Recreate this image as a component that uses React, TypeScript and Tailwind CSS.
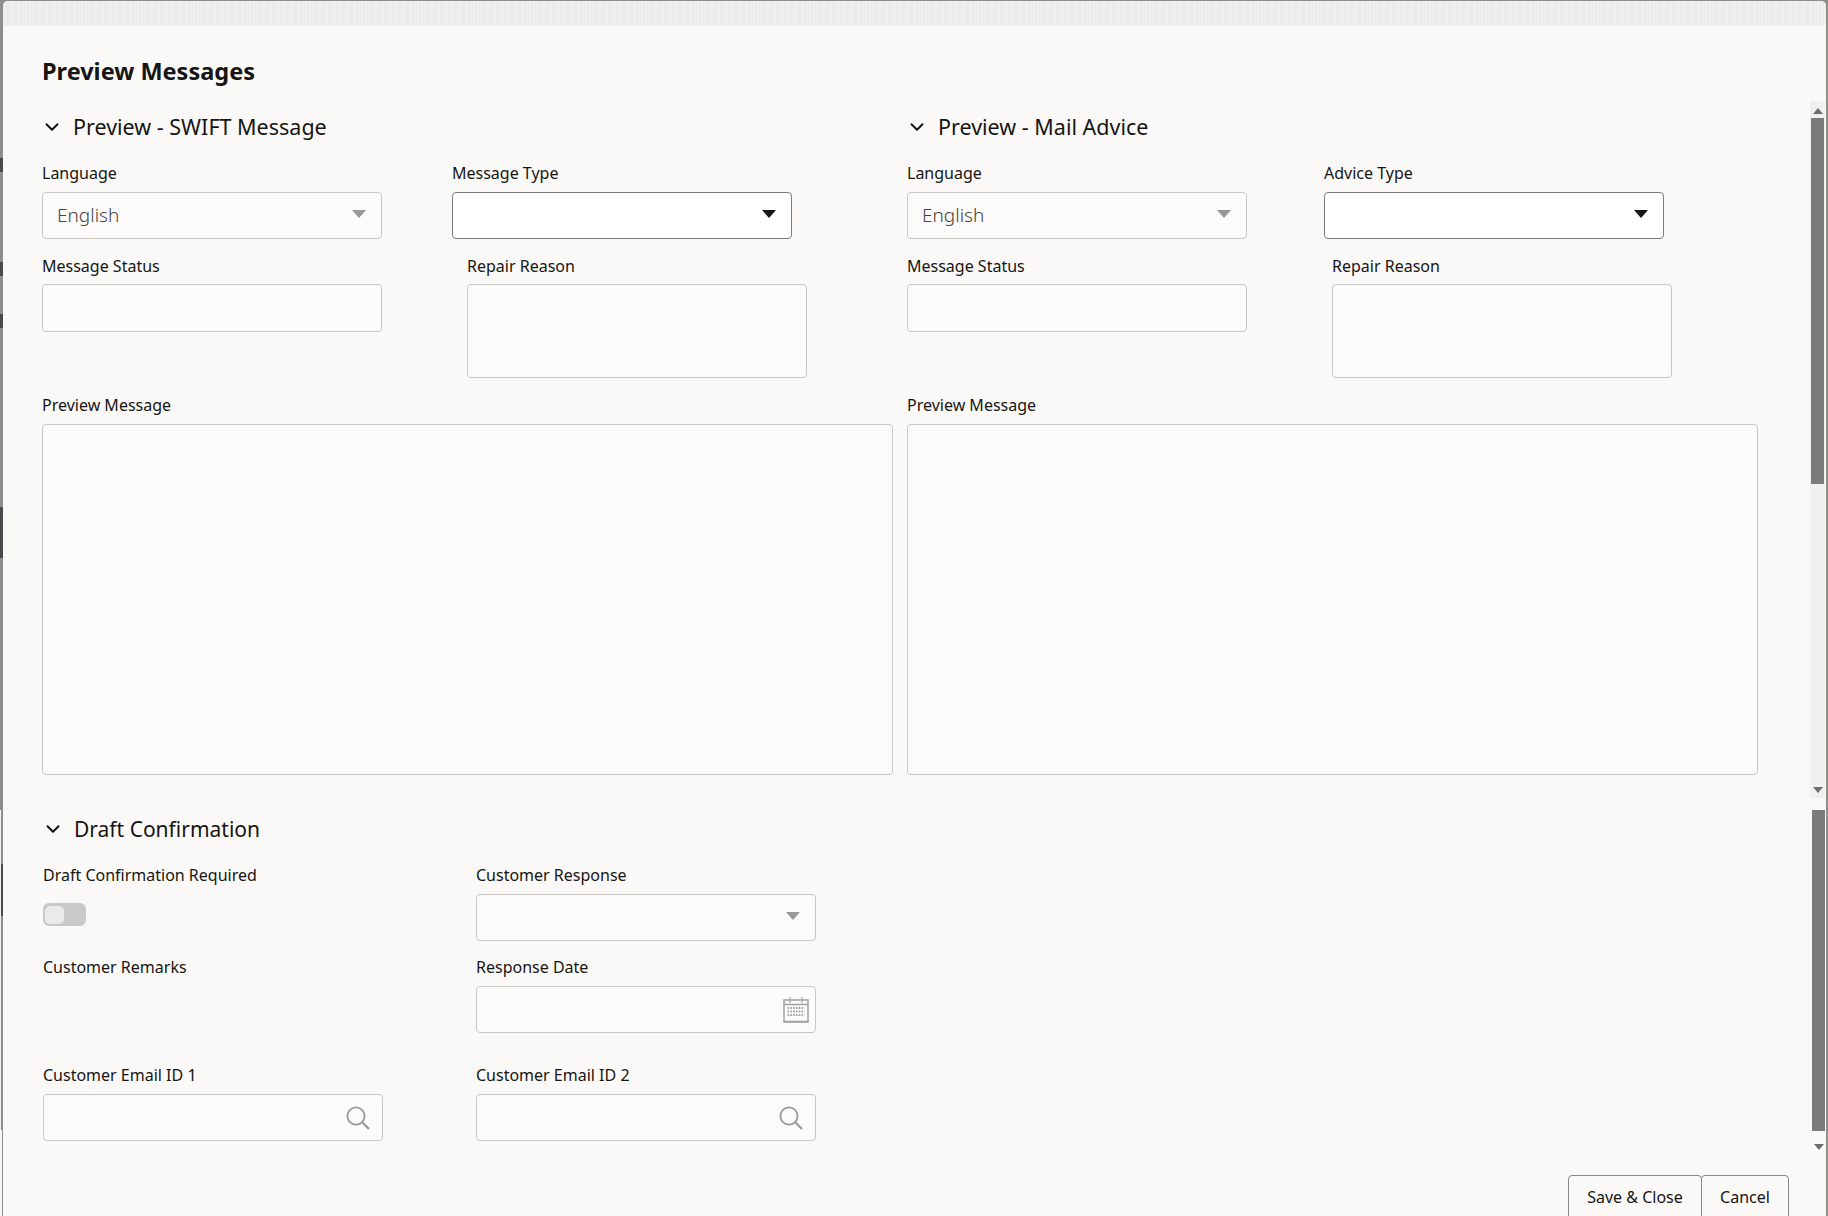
import type { ReactNode } from 'react';
import { ChevronDown } from 'lucide-react';

const labelClass = 'block h-[18px] text-[16px] leading-[18px] text-[#161513] whitespace-nowrap';
const boxClass = 'w-[340px] rounded-[4px] border border-[#c9c7c4] bg-[#fcfbfa]';

const Caret = ({ dark = false }: { dark?: boolean }) => (
  <svg width="14" height="8" viewBox="0 0 14 8" className="shrink-0">
    <path d="M0 0h14L7 8z" fill={dark ? '#161513' : '#9a9896'} />
  </svg>
);

const SearchIcon = () => (
  <svg width="24" height="24" viewBox="0 0 24 24" fill="none" stroke="#9a9896" className="shrink-0">
    <circle cx="10" cy="10" r="8.6" strokeWidth="1.8" />
    <path d="M16.2 16.2 23 23" strokeWidth="2.2" />
  </svg>
);

const CalendarIcon = () => (
  <svg width="26" height="26" viewBox="0 0 26 26" fill="none" className="shrink-0">
    <rect x="1" y="3" width="24" height="22" fill="#fcfbfa" stroke="#a3a19f" strokeWidth="1.5" />
    <path d="M1 7.5h24M1 24.5h24" stroke="#a3a19f" strokeWidth="1.5" />
    <path d="M7 0v6M19 0v6" stroke="#a3a19f" strokeWidth="1.2" />
    <path d="M4.5 11h17M4.5 14.5h17M4.5 18h17" stroke="#a3a19f" strokeWidth="1.8" strokeDasharray="1.6 1.2" />
  </svg>
);

const Field = ({ label, className = '', children }: { label: string; className?: string; children: ReactNode }) => (
  <div className={className}>
    <label className={labelClass}>{label}</label>
    {children}
  </div>
);

const SelectBox = ({ value, active = false }: { value?: string; active?: boolean }) => (
  <div
    className={`mt-[10px] flex h-[47px] w-[340px] items-center justify-between rounded-[4px] border pl-[14px] pr-[15px] ${
      active ? 'border-[#7d7b79] bg-white' : 'border-[#c9c7c4] bg-[#fcfbfa]'
    }`}
  >
    <span className="text-[19px] font-light text-[#45433f]">{value}</span>
    <span className="-mt-[3px] flex">
      <Caret dark={active} />
    </span>
  </div>
);

const SectionHead = ({ title, textClass = 'text-[21.5px]' }: { title: string; textClass?: string }) => (
  <div className="flex h-[26px] items-center">
    <ChevronDown size={22} strokeWidth={2.2} className="-ml-[1px] text-[#161513]" />
    <h2 className={`ml-[10px] leading-[26px] text-[#161513] ${textClass}`}>{title}</h2>
  </div>
);

const PreviewPanel = ({
  title,
  typeLabel,
  typeGap,
  className = '',
}: {
  title: string;
  typeLabel: string;
  typeGap: string;
  className?: string;
}) => (
  <section className={`w-[851px] ${className}`}>
    <SectionHead title={title} />
    <div className="mt-[24px] flex">
      <Field label="Language">
        <SelectBox value="English" />
      </Field>
      <Field label={typeLabel} className={typeGap}>
        <SelectBox active />
      </Field>
    </div>
    <div className="mt-[18px] flex">
      <Field label="Message Status">
        <div className={`mt-[9px] h-[48px] ${boxClass}`} />
      </Field>
      <Field label="Repair Reason" className="ml-[85px]">
        <div className={`mt-[9px] h-[94px] ${boxClass}`} />
      </Field>
    </div>
    <Field label="Preview Message" className="mt-[18px]">
      <div className="mt-[10px] h-[351px] w-[851px] rounded-[4px] border border-[#c9c7c4] bg-[#fcfbfa]" />
    </Field>
  </section>
);

const InputWithIcon = ({ icon }: { icon: ReactNode }) => (
  <div className={`mt-[10px] flex h-[47px] items-center justify-end pr-[6px] ${boxClass}`}>{icon}</div>
);

const ScrollArrow = ({ up = false }: { up?: boolean }) => (
  <svg width="10" height="6" viewBox="0 0 10 6" className="mx-auto">
    <path d={up ? 'M0 6h10L5 0z' : 'M0 0h10L5 6z'} fill="#6f6d6b" />
  </svg>
);

// bits of the page behind the dialog that show in the left gutter
const Gutter = () => (
  <div className="absolute inset-y-0 left-0 w-[3px]">
    <div className="absolute left-0 top-[158px] h-[14px] w-full bg-[#4a4a4c]" />
    <div className="absolute left-0 top-[262px] h-[14px] w-full bg-[#4a4a4c]" />
    <div className="absolute left-0 top-[314px] h-[14px] w-full bg-[#4a4a4c]" />
    <div className="absolute left-0 top-[507px] h-[51px] w-full bg-[#4a4a4c]" />
    <div className="absolute left-0 top-[810px] h-[320px] w-[1px] bg-[#f4f4f2]" />
    <div className="absolute left-[1px] top-[864px] h-[52px] w-[2px] bg-[#4a4a4c]" />
    <div className="absolute left-0 top-[1130px] h-[86px] w-[2px] bg-[#f4f4f2]" />
  </div>
);

export default function App() {
  return (
    <div className="relative h-[1216px] w-[1828px] overflow-hidden bg-[#8f8e8b] pl-[3px] pr-[2px] pt-px font-['Noto_Sans',sans-serif]">
      <Gutter />
      <div className="relative flex h-[1215px] flex-col overflow-hidden rounded-t-[5px] bg-[#faf9f7]">
        <div className="h-[25px] shrink-0 bg-[repeating-linear-gradient(90deg,#e9e8e6_0px,#f4f3f1_2px,#ebe9e7_4px,#f2f1ef_7px)]" />

        <div className="pl-[39px] pt-[29px]">
          <h1 className="text-[23.5px] font-bold leading-[32px] text-[#161513]">Preview Messages</h1>
        </div>

        <div className="mt-[14px] flex h-[697px] shrink-0">
          <div className="flex flex-1 pl-[39px] pt-[13px]">
            <PreviewPanel title="Preview - SWIFT Message" typeLabel="Message Type" typeGap="ml-[70px]" />
            <PreviewPanel
              title="Preview - Mail Advice"
              typeLabel="Advice Type"
              typeGap="ml-[77px]"
              className="ml-[14px]"
            />
          </div>
          <div className="mr-[1px] flex w-[15px] flex-col bg-[#f1f0ee] pt-[7px]">
            <ScrollArrow up />
            <div className="mx-auto mt-[4px] h-[366px] w-[13px] bg-[#7b7b7b]" />
            <div className="flex-1" />
            <div className="pb-[5px]">
              <ScrollArrow />
            </div>
          </div>
        </div>

        <section className="pl-[40px] pt-[18px]">
          <SectionHead title="Draft Confirmation" textClass="text-[21px]" />
          <div className="mt-[24px] flex">
            <Field label="Draft Confirmation Required" className="w-[340px]">
              <div className="mt-[19px] flex h-[23px] w-[43px] items-center rounded-[6px] bg-[#cbc9c7] pl-[2px]">
                <div className="h-[18px] w-[19px] rounded-[5px] bg-[#ebeae8]" />
              </div>
            </Field>
            <Field label="Customer Response" className="ml-[93px]">
              <SelectBox />
            </Field>
          </div>
          <div className="mt-[17px] flex">
            <Field label="Customer Remarks" className="w-[340px]">
              <div className="h-[47px]" />
            </Field>
            <Field label="Response Date" className="ml-[93px]">
              <InputWithIcon icon={<CalendarIcon />} />
            </Field>
          </div>
          <div className="mt-[33px] flex">
            <Field label="Customer Email ID 1" className="w-[340px]">
              <InputWithIcon icon={<span className="mr-[6px] flex"><SearchIcon /></span>} />
            </Field>
            <Field label="Customer Email ID 2" className="ml-[93px]">
              <InputWithIcon icon={<span className="mr-[6px] flex"><SearchIcon /></span>} />
            </Field>
          </div>
        </section>

        <div className="absolute right-[37px] top-[1174px] flex">
          <button className="h-[60px] w-[134px] rounded-[4px] border border-[#8b8987] bg-[#faf9f7] pb-[17px] text-[16px] text-[#161513]">
            Save &amp; Close
          </button>
          <button className="-ml-px h-[60px] w-[88px] rounded-[4px] border border-[#8b8987] bg-[#faf9f7] pb-[17px] text-[16px] text-[#161513]">
            Cancel
          </button>
        </div>

        <div className="absolute right-[1px] top-[809px] h-[321px] w-[13px] bg-[#7b7b7b]" />
        <div className="absolute right-[2px] top-[1143px] w-[10px]">
          <ScrollArrow />
        </div>
      </div>
    </div>
  );
}
